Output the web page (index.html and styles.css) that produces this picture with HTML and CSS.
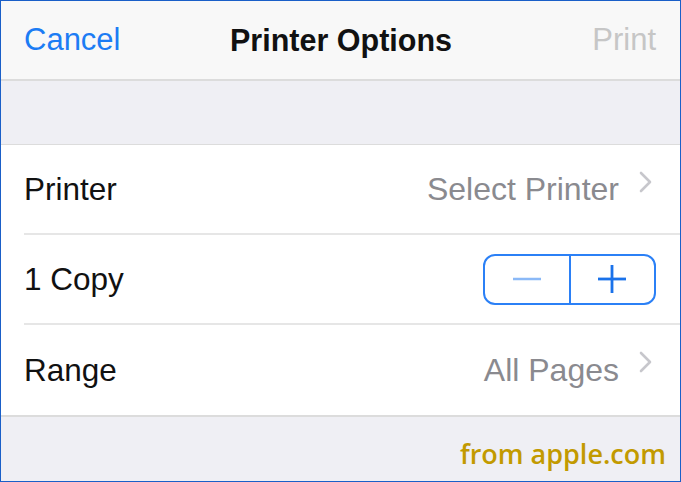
FILE: index.html
```html
<!DOCTYPE html>
<html>
<head>
<meta charset="utf-8">
<link rel="stylesheet" href="styles.css">
</head>
<body>
<div class="frame">
  <header class="nav">
    <span class="nav-btn cancel">Cancel</span>
    <span class="nav-title">Printer Options</span>
    <span class="nav-btn print">Print</span>
  </header>
  <div class="spacer"></div>
  <section class="group">
    <div class="row">
      <span class="label">Printer</span>
      <span class="value">Select Printer</span>
      <svg class="chev" width="14" height="22" viewBox="0 0 14 22"><polyline points="2,2 11,11 2,20" fill="none" stroke="#c7c7cc" stroke-width="2.6" stroke-linecap="round" stroke-linejoin="round"/></svg>
    </div>
    <div class="row">
      <span class="label">1 Copy</span>
      <div class="stepper">
        <div class="step minus"><svg width="30" height="4" viewBox="0 0 30 4"><line x1="1" y1="2" x2="29" y2="2" stroke="#8bb9f7" stroke-width="2.5"/></svg></div>
        <div class="step plus"><svg width="30" height="30" viewBox="0 0 30 30"><line x1="1" y1="15" x2="29" y2="15" stroke="#1a72ea" stroke-width="2.8"/><line x1="15" y1="1" x2="15" y2="29" stroke="#1a72ea" stroke-width="2.8"/></svg></div>
      </div>
    </div>
    <div class="row last">
      <span class="label">Range</span>
      <span class="value">All Pages</span>
      <svg class="chev" width="14" height="22" viewBox="0 0 14 22"><polyline points="2,2 11,11 2,20" fill="none" stroke="#c7c7cc" stroke-width="2.6" stroke-linecap="round" stroke-linejoin="round"/></svg>
    </div>
  </section>
  <footer class="foot">
    <span class="credit">from apple.com</span>
  </footer>
</div>
</body>
</html>
```

FILE: styles.css
```css
* { box-sizing: border-box; }
html, body { margin: 0; padding: 0; background: #fff; }
.frame {
  width: 681px;
  height: 482px;
  border: 1px solid #1a5fc8;
  background: #efeff4;
  display: flex;
  flex-direction: column;
  font-family: "Liberation Sans", Arial, sans-serif;
  overflow: hidden;
}
.nav {
  height: 80px;
  flex: none;
  background: #f8f8f8;
  border-bottom: 2px solid #dcdcdc;
  display: flex;
  align-items: center;
  justify-content: space-between;
  padding: 0 24px 0 23px;
  position: relative;
}
.nav-btn { font-size: 31px; }
.cancel { color: #1c7cf4; }
.print { color: #c6c6c6; }
.nav-title {
  font-size: 30.5px;
  font-weight: bold;
  color: #111;
  position: absolute;
  left: 229px;
  top: 22px;
}
.spacer { height: 63px; flex: none; }
.group {
  background: #fff;
  border-top: 1px solid #dcdcdc;
  border-bottom: 2px solid #dcdcdc;
  padding-left: 23px;
}
.row {
  height: 90px;
  display: flex;
  align-items: center;
  border-bottom: 2px solid #e6e6e6;
  padding-right: 24px;
}
.row.last { border-bottom: none; height: 90px; }
.label { font-size: 31.5px; color: #111; flex: 1; }
.value { font-size: 32px; color: #8a8a8f; }
.chev { margin-left: 20px; margin-right: 3px; align-self: flex-start; margin-top: 26px; }
.stepper {
  width: 173px;
  height: 51px;
  border: 2px solid #2b80f6;
  border-radius: 12px;
  display: flex;
}
.step { flex: 1; display: flex; align-items: center; justify-content: center; }
.minus { border-right: 2px solid #2b80f6; }
.foot {
  flex: 1;
  display: flex;
  justify-content: flex-end;
  align-items: flex-start;
  padding: 18px 14px 0 0;
}
.credit {
  font-family: "Open Sans", sans-serif;
  font-weight: 600;
  font-size: 27px;
  color: #c29a00;
}
```
